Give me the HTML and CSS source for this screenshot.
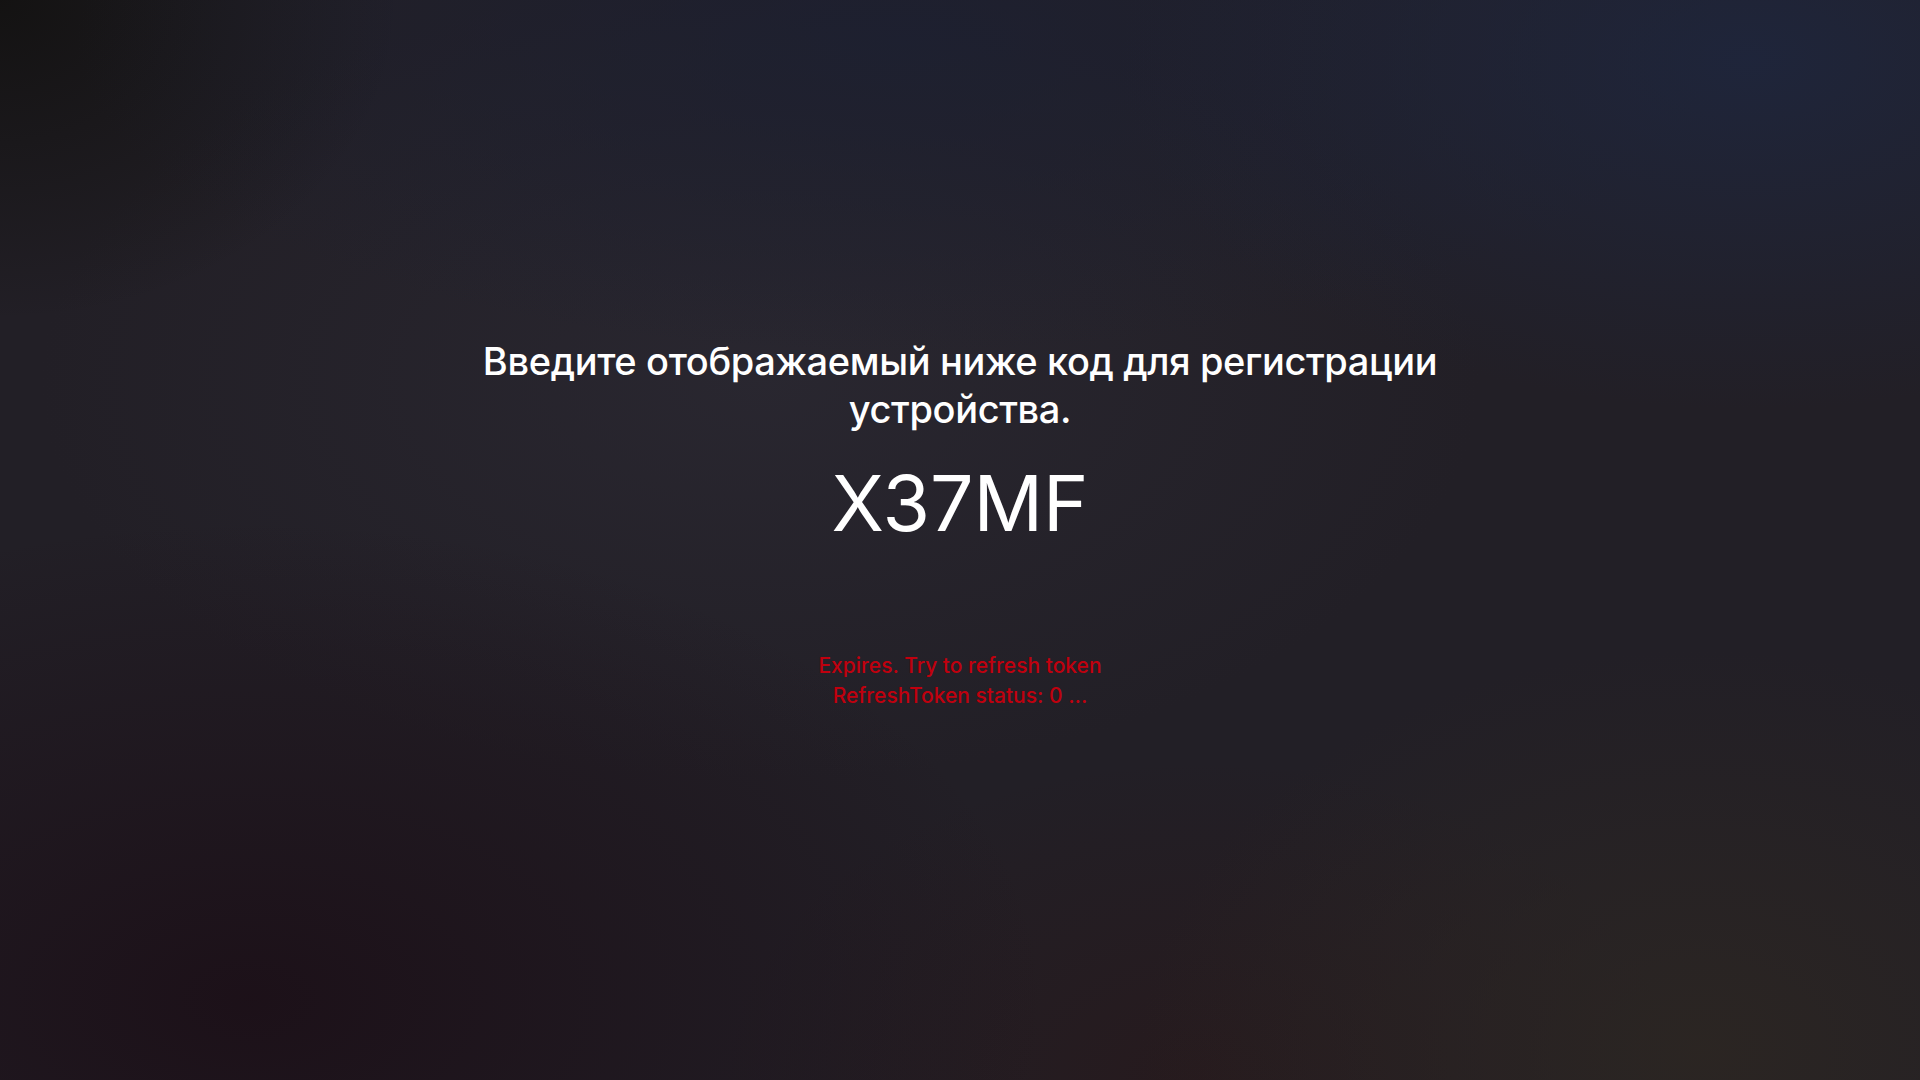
FILE: index.html
```html
<!DOCTYPE html>
<html lang="ru">
<head>
<meta charset="utf-8">
<title>Регистрация устройства</title>
<link rel="stylesheet" href="styles.css">
</head>
<body>
<main class="screen">
  <h1 class="prompt">Введите отображаемый ниже код для регистрации<br>устройства.</h1>
  <div class="code">X37MF</div>
  <div class="status">
    <p>Expires. Try to refresh token</p>
    <p>RefreshToken status: 0 ...</p>
  </div>
</main>
</body>
</html>
```

FILE: styles.css
```css
html, body {
  margin: 0;
  padding: 0;
  width: 1920px;
  height: 1080px;
  overflow: hidden;
}

body {
  font-family: Inter, "Noto Sans", sans-serif;
  color: #ffffff;
  background-color: #221f26;
  background-image:
    radial-gradient(ellipse 900px 500px at 1750px 60px, rgba(30, 38, 62, 0.85), rgba(30, 38, 62, 0) 70%),
    radial-gradient(ellipse 1100px 420px at 900px 40px, rgba(28, 32, 50, 0.8), rgba(28, 32, 50, 0) 75%),
    radial-gradient(ellipse 500px 400px at 0px 0px, rgba(18, 17, 16, 0.9), rgba(18, 17, 16, 0) 80%),
    radial-gradient(ellipse 1000px 600px at 250px 1000px, rgba(28, 16, 24, 0.95), rgba(28, 16, 24, 0) 80%),
    radial-gradient(ellipse 700px 500px at 1700px 1050px, rgba(44, 38, 34, 0.9), rgba(44, 38, 34, 0) 80%),
    radial-gradient(ellipse 600px 400px at 1200px 1080px, rgba(40, 24, 26, 0.7), rgba(40, 24, 26, 0) 80%),
    radial-gradient(ellipse 900px 500px at 760px 380px, rgba(44, 42, 52, 0.7), rgba(44, 42, 52, 0) 80%);
}

.screen {
  display: flex;
  flex-direction: column;
  align-items: center;
  padding-top: 337px;
  text-align: center;
}

.prompt {
  margin: 0;
  font-size: 38px;
  line-height: 48px;
  font-weight: 500;
  letter-spacing: -0.36px;
}

.code {
  margin-top: 22px;
  font-size: 77px;
  line-height: 96px;
  font-weight: 400;
}

.status {
  margin-top: 100px;
  color: #c0000e;
  font-size: 21px;
  line-height: 30px;
  font-weight: 500;
}

.status p {
  margin: 0;
}
```
